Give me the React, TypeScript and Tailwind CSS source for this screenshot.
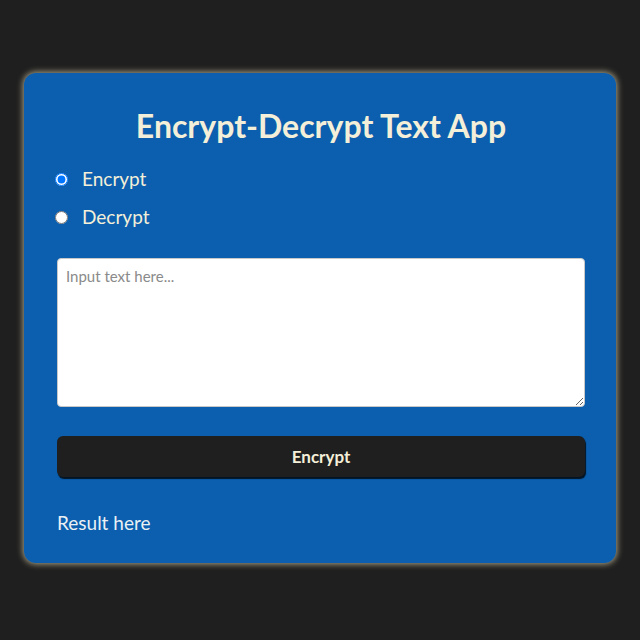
import { useState } from "react";

export default function App() {
  const [mode, setMode] = useState<"encrypt" | "decrypt">("encrypt");

  return (
    <div
      className="min-h-[640px] bg-[#1f1f1f] px-6 pt-[73px]"
      style={{ fontFamily: "Lato, 'Open Sans', sans-serif" }}
    >
      <div className="h-[490px] w-[592px] rounded-[12px] bg-[#0b5fae] pl-[33px] pr-[31px] pt-[34px] shadow-[0_0_6px_1px_rgba(235,225,185,0.7)]">
        <h1 className="text-center text-[32px] font-bold leading-[38px] text-[#f4efd8]">
          Encrypt-Decrypt Text App
        </h1>

        <div className="mt-[23px] flex flex-col gap-[16px]">
          {(["encrypt", "decrypt"] as const).map((m) => (
            <label key={m} className="-ml-[2px] flex h-[22px] items-center gap-[14px] text-[19px] text-[#f4efd8]">
              <input
                type="radio"
                name="mode"
                checked={mode === m}
                onChange={() => setMode(m)}
                className="m-0 h-[13px] w-[13px]"
              />
              {m === "encrypt" ? "Encrypt" : "Decrypt"}
            </label>
          ))}
        </div>

        <textarea
          placeholder="Input text here..."
          className="mt-[30px] block h-[149px] w-full rounded-[4px] border border-[#c8c8c8] bg-white px-[8px] py-[6px] text-[15px] text-[#333] placeholder:text-[#8a8a8a]"
        />

        <button className="mt-[29px] block h-[41px] w-full rounded-[6px] bg-[#1f1f1f] text-[17px] font-bold text-[#f4efd8] shadow-[1px_2px_1px_rgba(0,0,0,0.8)]">
          Encrypt
        </button>

        <p className="mt-[32px] text-[19px] text-[#eaf0f4]">Result here</p>
      </div>
    </div>
  );
}
